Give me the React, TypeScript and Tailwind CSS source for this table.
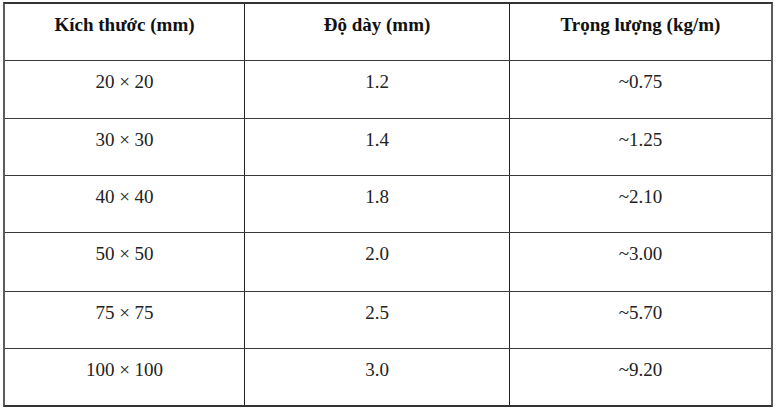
import React from "react";

const rows: [string, string, string][] = [
  ["20 × 20", "1.2", "~0.75"],
  ["30 × 30", "1.4", "~1.25"],
  ["40 × 40", "1.8", "~2.10"],
  ["50 × 50", "2.0", "~3.00"],
  ["75 × 75", "2.5", "~5.70"],
  ["100 × 100", "3.0", "~9.20"],
];

const heights = ["h-[58px]", "h-[57px]", "h-[57px]", "h-[59px]", "h-[57px]", "h-[56px]"];

export default function App() {
  return (
    <div className="w-[777px] h-[410px] bg-white pt-[2px] pl-[3px] font-['Liberation_Serif','Times_New_Roman',serif]">
      <div className="w-[770px] border-t-2 border-l-2 border-r-2 border-b-2 border-t-[#333] border-l-[#5c5c5c] border-r-[#5c5c5c] border-b-[#333]">
        <div className="grid grid-cols-[240px_265px_261px] h-[57px] border-b border-[#3a3a3a] text-[19px] font-bold text-[#111]">
          <div className="border-r border-[#222] flex justify-center pt-[7px]">Kích thước (mm)</div>
          <div className="border-r border-[#222] flex justify-center pt-[7px]">Độ dày (mm)</div>
          <div className="flex justify-center pt-[7px]">Trọng lượng (kg/m)</div>
        </div>
        {rows.map((r, i) => (
          <div
            key={i}
            className={`grid grid-cols-[240px_265px_261px] ${heights[i]} ${i < rows.length - 1 ? "border-b border-[#3a3a3a]" : ""} text-[19px] text-[#222]`}
          >
            <div className="border-r border-[#222] flex justify-center pt-[7px]">{r[0]}</div>
            <div className="border-r border-[#222] flex justify-center pt-[7px]">{r[1]}</div>
            <div className="flex justify-center pt-[7px]">{r[2]}</div>
          </div>
        ))}
      </div>
    </div>
  );
}
